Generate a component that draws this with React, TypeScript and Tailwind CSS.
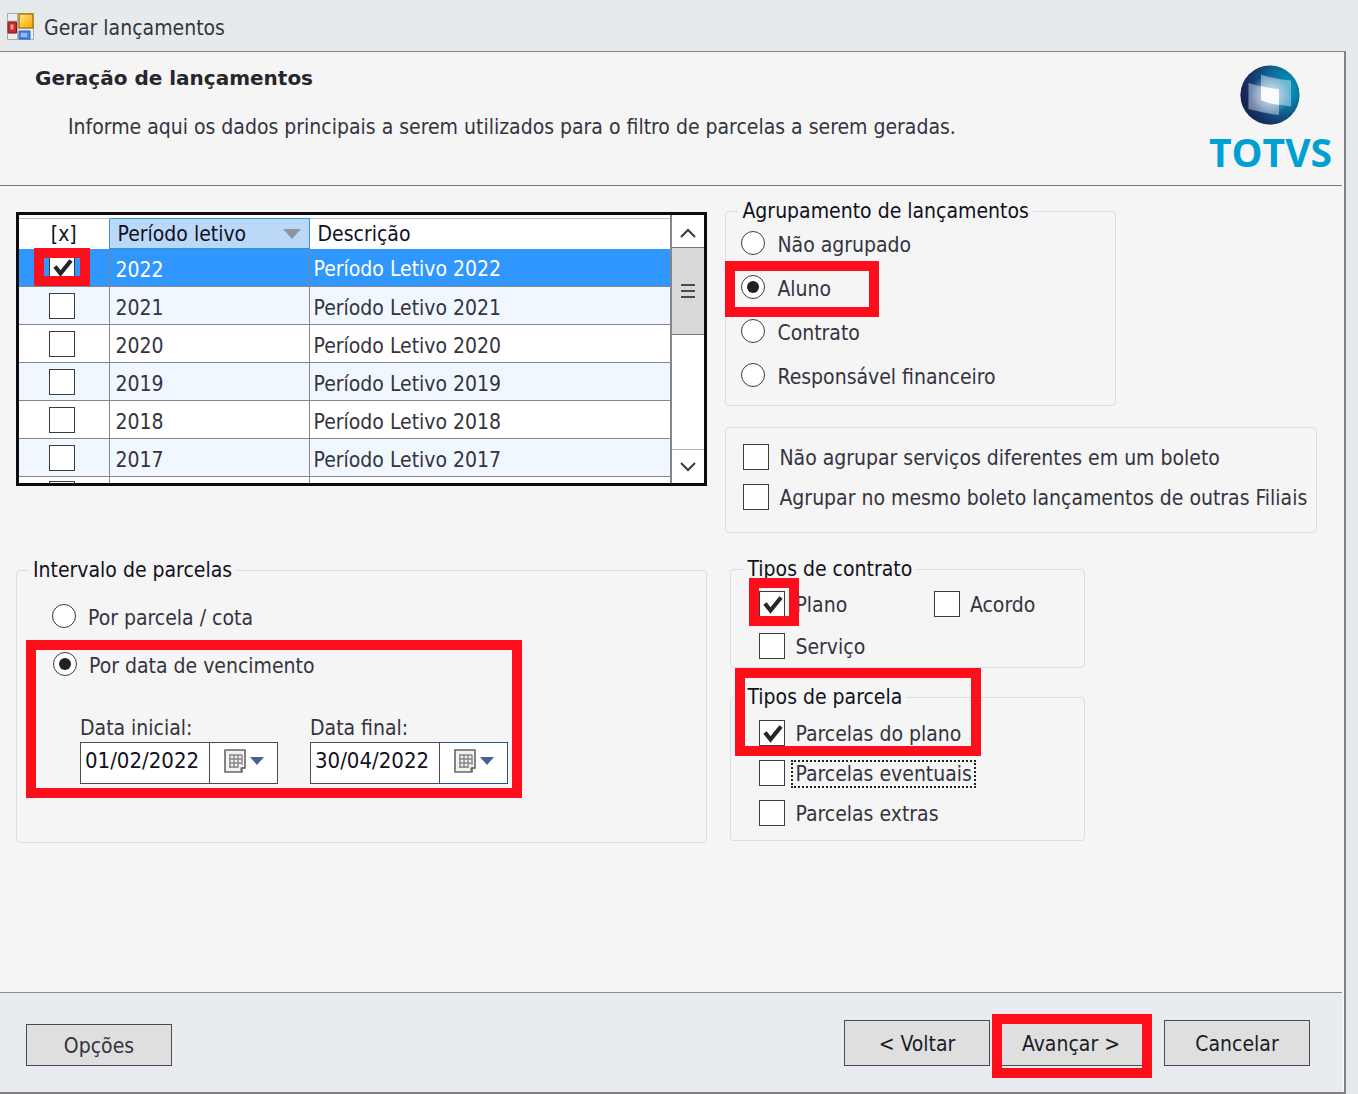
import React, { ReactNode, useState } from 'react';
import { clsx } from 'clsx';

const periods = [2022, 2021, 2020, 2019, 2018, 2017];

const groupings = ['Não agrupado', 'Aluno', 'Contrato', 'Responsável financeiro'];

interface CheckProps {
  defaultChecked?: boolean;
  label?: string;
  children?: ReactNode;
}

function Highlight({ className }: { className: string }) {
  return (
    <div
      aria-hidden="true"
      className={clsx('pointer-events-none absolute z-10 border-10 border-[#fc0f1b]', className)}
    />
  );
}

function CheckBox({ defaultChecked, label }: CheckProps) {
  return (
    <span className="grid shrink-0">
      <input
        type="checkbox"
        defaultChecked={defaultChecked}
        aria-label={label}
        className="peer col-start-1 row-start-1 size-[26px] appearance-none border border-[#3c3c3c] bg-white"
      />
      <svg
        viewBox="0 0 26 26"
        className="pointer-events-none invisible col-start-1 row-start-1 size-[26px] peer-checked:visible"
      >
        <path d="M6 12.500l5.500 7L22 6.500" fill="none" stroke="#262626" strokeWidth="4.200" />
      </svg>
    </span>
  );
}

function CheckOption({ defaultChecked, children }: CheckProps) {
  return (
    <label className="flex items-center gap-2.5">
      <CheckBox defaultChecked={defaultChecked} />
      <span className="pt-0.5">{children}</span>
    </label>
  );
}

interface RadioProps {
  name: string;
  defaultChecked?: boolean;
  children: ReactNode;
}

function RadioOption({ name, defaultChecked, children }: RadioProps) {
  return (
    <label className="flex items-center gap-3">
      <span className="grid shrink-0 place-items-center">
        <input
          type="radio"
          name={name}
          defaultChecked={defaultChecked}
          className="peer col-start-1 row-start-1 size-6 appearance-none rounded-full border border-[#3c3c3c] bg-white"
        />
        <span className="pointer-events-none invisible col-start-1 row-start-1 size-3 rounded-full bg-[#222] peer-checked:visible" />
      </span>
      <span className="pt-1">{children}</span>
    </label>
  );
}

interface GroupProps {
  title: string;
  className?: string;
  children: ReactNode;
}

function Group({ title, className, children }: GroupProps) {
  return (
    <fieldset className={clsx('min-w-0 rounded border border-[#d5dfea]', className)}>
      <legend className="ml-3 px-1 leading-7 text-[#111122]">{title}</legend>
      {children}
    </fieldset>
  );
}

function DateField({ id, label, initial, active }: { id: string; label: string; initial: string; active?: boolean }) {
  const [value, setValue] = useState(initial);

  return (
    <div>
      <label htmlFor={id} className="block h-7 leading-7">
        {label}
      </label>
      <div className="flex h-[42px]">
        <input
          id={id}
          value={value}
          onChange={(e) => setValue(e.target.value)}
          className="w-[129px] border border-r-0 border-[#4c4c50] bg-white pb-1 pl-1 text-[22px] text-[#111122] outline-none"
        />
        <button
          type="button"
          aria-label={`Abrir calendário: ${label}`}
          className={clsx(
            'flex w-[69px] items-center justify-center gap-1 border bg-white pb-1',
            active ? 'border-[#1d5596] border-l-[#4c4c50]' : 'border-[#4c4c50]'
          )}
        >
          <svg viewBox="0 0 22 24" className="h-6 w-[22px]">
            <path d="M1 1h20v18h-3v4H1z" fill="#f4f2f0" stroke="#6a6664" strokeWidth="1.6" />
            <path d="M17 23v-4h4" fill="none" stroke="#6a6664" strokeWidth="1.2" />
            <path d="M5 6h13M5 10h13M5 14h12M5 18h9M6 6v13M10 6v13M14 6v13M18 6v10" stroke="#85858c" strokeWidth="1.4" />
          </svg>
          <svg viewBox="0 0 14 8" className="h-2 w-3.5">
            <path d="M0 0h14L7 8z" fill="#46638f" />
          </svg>
        </button>
      </div>
    </div>
  );
}

function PeriodTable() {
  return (
    <div className="flex h-[274px] border-3 border-[#0c0c10] bg-white">
      <div className="min-w-0 flex-1 overflow-hidden pt-[3px]">
        <table className="w-full table-fixed border-collapse text-left">
          <thead>
            <tr className="h-[30px] text-[#111122]">
              <th className="h-[30px] w-[90px] border-t border-[#c0c0c0] p-0 text-center font-normal">[x]</th>
              <th className="w-[200px] border border-[#3d8fd0] bg-[#bcd8f8] px-2 py-0 font-normal">
                <span className="flex items-center justify-between">
                  Período letivo
                  <svg viewBox="0 0 18 10" className="h-2.5 w-[18px]">
                    <path d="M0 0h18L9 10z" fill="#8f959c" />
                  </svg>
                </span>
              </th>
              <th className="border-t border-[#c0c0c0] py-0 pl-2 font-normal">Descrição</th>
            </tr>
          </thead>
          <tbody>
            {periods.map((year, i) => (
              <tr
                key={year}
                className={clsx(
                  'h-[38px] border-b border-[#85858a]',
                  i === 0 ? 'bg-[#3097ff] text-white' : i % 2 ? 'bg-[#f0f7fe]' : 'bg-white'
                )}
              >
                <td className="relative border-r border-[#85858a] p-0">
                  <div className="flex justify-center pr-1">
                    <CheckBox defaultChecked={i === 0} label={`Selecionar ${year}`} />
                  </div>
                  {i === 0 && <Highlight className="-top-px left-[15px] h-[38px] w-14" />}
                </td>
                <td className="border-r border-[#85858a] p-0 pt-1 pl-1.5">{year}</td>
                <td className="p-0 pt-1 pl-1">Período Letivo {year}</td>
              </tr>
            ))}
            {/* Next row, only its top edge is in view */}
            <tr className="h-[38px]">
              <td className="border-r border-[#85858a] p-0">
                <div className="flex justify-center pr-1 pb-1">
                  <CheckBox label="Selecionar próximo período" />
                </div>
              </td>
              <td className="border-r border-[#85858a]" />
              <td />
            </tr>
          </tbody>
        </table>
      </div>
      <div className="flex w-[34px] flex-col border-l-2 border-[#85858a]">
        <button type="button" aria-label="Rolar para cima" className="flex h-8 items-center justify-center pt-1">
          <svg viewBox="0 0 16 10" className="h-2.5 w-4">
            <path d="M1 9l7-7 7 7" fill="none" stroke="#3a3a3a" strokeWidth="2" />
          </svg>
        </button>
        <div className="flex h-[88px] flex-col items-center justify-center gap-1 border-y border-[#777] bg-[#d9d9d9]">
          <span className="h-0.5 w-3.5 bg-[#4a4a4a]" />
          <span className="h-0.5 w-3.5 bg-[#4a4a4a]" />
          <span className="h-0.5 w-3.5 bg-[#4a4a4a]" />
        </div>
        <div className="flex-1" />
        <button
          type="button"
          aria-label="Rolar para baixo"
          className="flex h-[34px] items-center justify-center border-t border-[#b5b5b5]"
        >
          <svg viewBox="0 0 16 10" className="h-2.5 w-4">
            <path d="M1 1l7 7 7-7" fill="none" stroke="#3a3a3a" strokeWidth="2" />
          </svg>
        </button>
      </div>
    </div>
  );
}

function AppIcon() {
  return (
    <svg viewBox="0 0 27 27" className="size-[27px]">
      <defs>
        <linearGradient id="yellow" x1="0" y1="0" x2="1" y2="1">
          <stop offset="0" stopColor="#ffe680" />
          <stop offset="1" stopColor="#f5a800" />
        </linearGradient>
      </defs>
      <path d="M.5 .5h26v26H.5z" fill="#eceef1" stroke="#a8a8a8" />
      <path d="M10.500 1v25M1 8h10M1 20h10" stroke="#b0b4b8" />
      <path d="M1 9h8.500v11H1z" fill="#cc2a2a" stroke="#8f1414" />
      <path d="M3.500 11.500h3v5h-3z" fill="#f3a39b" />
      <path d="M12 1h14v14H12z" fill="url(#yellow)" stroke="#b07d10" strokeWidth="1.500" />
      <path d="M12 18h11v8H12z" fill="#4a86e8" stroke="#2c5cc0" />
      <path d="M14 20h6v4h-6z" fill="#94bdf7" />
    </svg>
  );
}

function Logo() {
  return (
    <div className="flex flex-col items-center">
      <svg viewBox="0 0 60 60" className="size-[60px]">
        <defs>
          <linearGradient id="sphere" x1="0" y1=".65" x2="1" y2=".35">
            <stop offset="0" stopColor="#1c1c55" />
            <stop offset=".5" stopColor="#13598f" />
            <stop offset="1" stopColor="#00a3c4" />
          </linearGradient>
          <radialGradient id="shade" cx=".55" cy=".45" r=".55">
            <stop offset=".6" stopColor="#14254f" stopOpacity="0" />
            <stop offset="1" stopColor="#14254f" stopOpacity=".6" />
          </radialGradient>
          <radialGradient id="glow">
            <stop offset="0" stopColor="#fff" stopOpacity=".8" />
            <stop offset="1" stopColor="#fff" stopOpacity="0" />
          </radialGradient>
        </defs>
        <circle cx="30" cy="30" r="29.500" fill="url(#sphere)" />
        <circle cx="30" cy="30" r="29.500" fill="url(#shade)" />
        <path d="M21 9.500q15 5 30 6v26q-16-2-30-6z" fill="#cfe6f4" fillOpacity=".5" />
        <path d="M8.500 18q15 5 30.500 6v26q-16-2-30.500-6z" fill="#cfdcee" fillOpacity=".5" />
        <path d="M21 21q9 3 18 3v16q-9-1-18-5z" fill="#fff" fillOpacity=".85" />
        <circle cx="30" cy="30" r="20" fill="url(#glow)" />
      </svg>
      <span className="font-['Open_Sans',sans-serif] text-[39px] leading-[54px] font-bold text-[#00a0d2]">TOTVS</span>
    </div>
  );
}

const footerButton = 'h-[46px] w-[146px] border border-[#4c4c50] bg-[#dfdfdf] pt-0.5 text-[#1b1b26]';

function App() {
  return (
    <div className="flex min-h-screen flex-col bg-[#e7eaed] font-['DejaVu_Sans_Condensed','DejaVu_Sans',sans-serif] text-[21px] leading-7 text-[#34343f]">
      <div className="flex h-[51px] items-center gap-2.5 pt-0.5 pl-[7px]">
        <AppIcon />
        <h1 className="pt-0.5">Gerar lançamentos</h1>
      </div>

      <div className="mr-3 flex flex-1 flex-col border-t border-r-2 border-b-2 border-[#808086] bg-[#f5f5f5]">
        <header className="mr-0.5 flex h-[134px] justify-between border-b border-[#77777b] pr-2.5 pl-[35px]">
          <div className="pt-3">
            <h2 className="font-['DejaVu_Sans',sans-serif] text-[20px] font-bold text-[#26262c]">
              Geração de lançamentos
            </h2>
            <p className="mt-[21px] pl-[33px]">
              Informe aqui os dados principais a serem utilizados para o filtro de parcelas a serem geradas.
            </p>
          </div>
          <div className="pt-[13px]">
            <Logo />
          </div>
        </header>

        {/* Filters */}
        <main className="grid flex-1 grid-cols-[692fr_592fr] content-start gap-x-[18px] pr-[27px] pb-6 pl-4">
          <div className="pt-[26px]">
            <PeriodTable />

            <Group title="Intervalo de parcelas" className="mt-[70px] pb-11">
              <div className="pt-2">
                <div className="flex h-12 items-center pl-[35px]">
                  <RadioOption name="interval">Por parcela / cota</RadioOption>
                </div>
                <div className="relative pb-3.5">
                  <Highlight className="inset-y-0 left-[9px] w-[496px]" />
                  <div className="flex h-12 items-center pl-9">
                    <RadioOption name="interval" defaultChecked>
                      Por data de vencimento
                    </RadioOption>
                  </div>
                  <div className="mt-[26px] flex gap-8 pl-[63px]">
                    <DateField id="start-date" label="Data inicial:" initial="01/02/2022" />
                    <DateField id="end-date" label="Data final:" initial="30/04/2022" active />
                  </div>
                </div>
              </div>
            </Group>
          </div>

          <div className="pt-[11px]">
            <Group title="Agrupamento de lançamentos" className="w-[66%] pb-3">
              <div className="flex flex-col gap-2">
                {groupings.map((name) => (
                  <div key={name} className="relative flex h-9 items-center pl-[15px]">
                    <RadioOption name="grouping" defaultChecked={name === 'Aluno'}>
                      {name}
                    </RadioOption>
                    {name === 'Aluno' && <Highlight className="-top-2 -bottom-3 -left-px w-[154px]" />}
                  </div>
                ))}
              </div>
            </Group>

            <div className="mt-[21px] flex flex-col rounded border border-[#d5dfea] pt-[9px] pb-[15px] pl-[17px]">
              <div className="flex h-10 items-center">
                <CheckOption>Não agrupar serviços diferentes em um boleto</CheckOption>
              </div>
              <div className="flex h-10 items-center whitespace-nowrap">
                <CheckOption>Agrupar no mesmo boleto lançamentos de outras Filiais</CheckOption>
              </div>
            </div>

            <Group title="Tipos de contrato" className="mt-[22px] ml-[5px] w-[60%]">
              <div className="grid grid-cols-2 pl-7">
                <div className="relative flex h-[42px] items-center">
                  <CheckOption defaultChecked>Plano</CheckOption>
                  <Highlight className="-top-[5px] -left-2.5 h-12 w-[50px]" />
                </div>
                <div className="flex h-[42px] items-center pl-3">
                  <CheckOption>Acordo</CheckOption>
                </div>
                <div className="flex h-[42px] items-center">
                  <CheckOption>Serviço</CheckOption>
                </div>
              </div>
            </Group>

            <div className="relative mt-[15px] ml-[5px] w-[60%]">
              <Group title="Tipos de parcela" className="pb-[7px]">
                <div className="pt-0.5 pl-7">
                  <div className="flex h-10 items-center">
                    <CheckOption defaultChecked>Parcelas do plano</CheckOption>
                  </div>
                  <div className="flex h-10 items-center">
                    <CheckOption>
                      <span className="-m-1 block border-2 border-dotted border-[#222] px-0.5 leading-6">
                        Parcelas eventuais
                      </span>
                    </CheckOption>
                  </div>
                  <div className="flex h-10 items-center">
                    <CheckOption>Parcelas extras</CheckOption>
                  </div>
                </div>
              </Group>
              <Highlight className="-top-[15px] left-[5px] h-22 w-[246px]" />
            </div>
          </div>
        </main>

        {/* Wizard navigation */}
        <footer className="mr-0.5 flex h-[100px] items-start justify-between border-t border-[#8c8c90] bg-[#e8ecf0] pt-[27px] pr-8 pl-[26px]">
          <button type="button" className="mt-1 h-[42px] w-[146px] border border-[#4c4c50] bg-[#dfdfdf] pt-0.5">
            Opções
          </button>
          <div className="flex">
            <button type="button" className={footerButton}>
              &lt; Voltar
            </button>
            <div className="relative mr-5 ml-2">
              <button type="button" className={footerButton}>
                Avançar &gt;
              </button>
              <Highlight className="-top-1.5 -right-2 -bottom-3 -left-1.5" />
            </div>
            <button type="button" className={footerButton}>
              Cancelar
            </button>
          </div>
        </footer>
      </div>
    </div>
  );
}

export default App;
